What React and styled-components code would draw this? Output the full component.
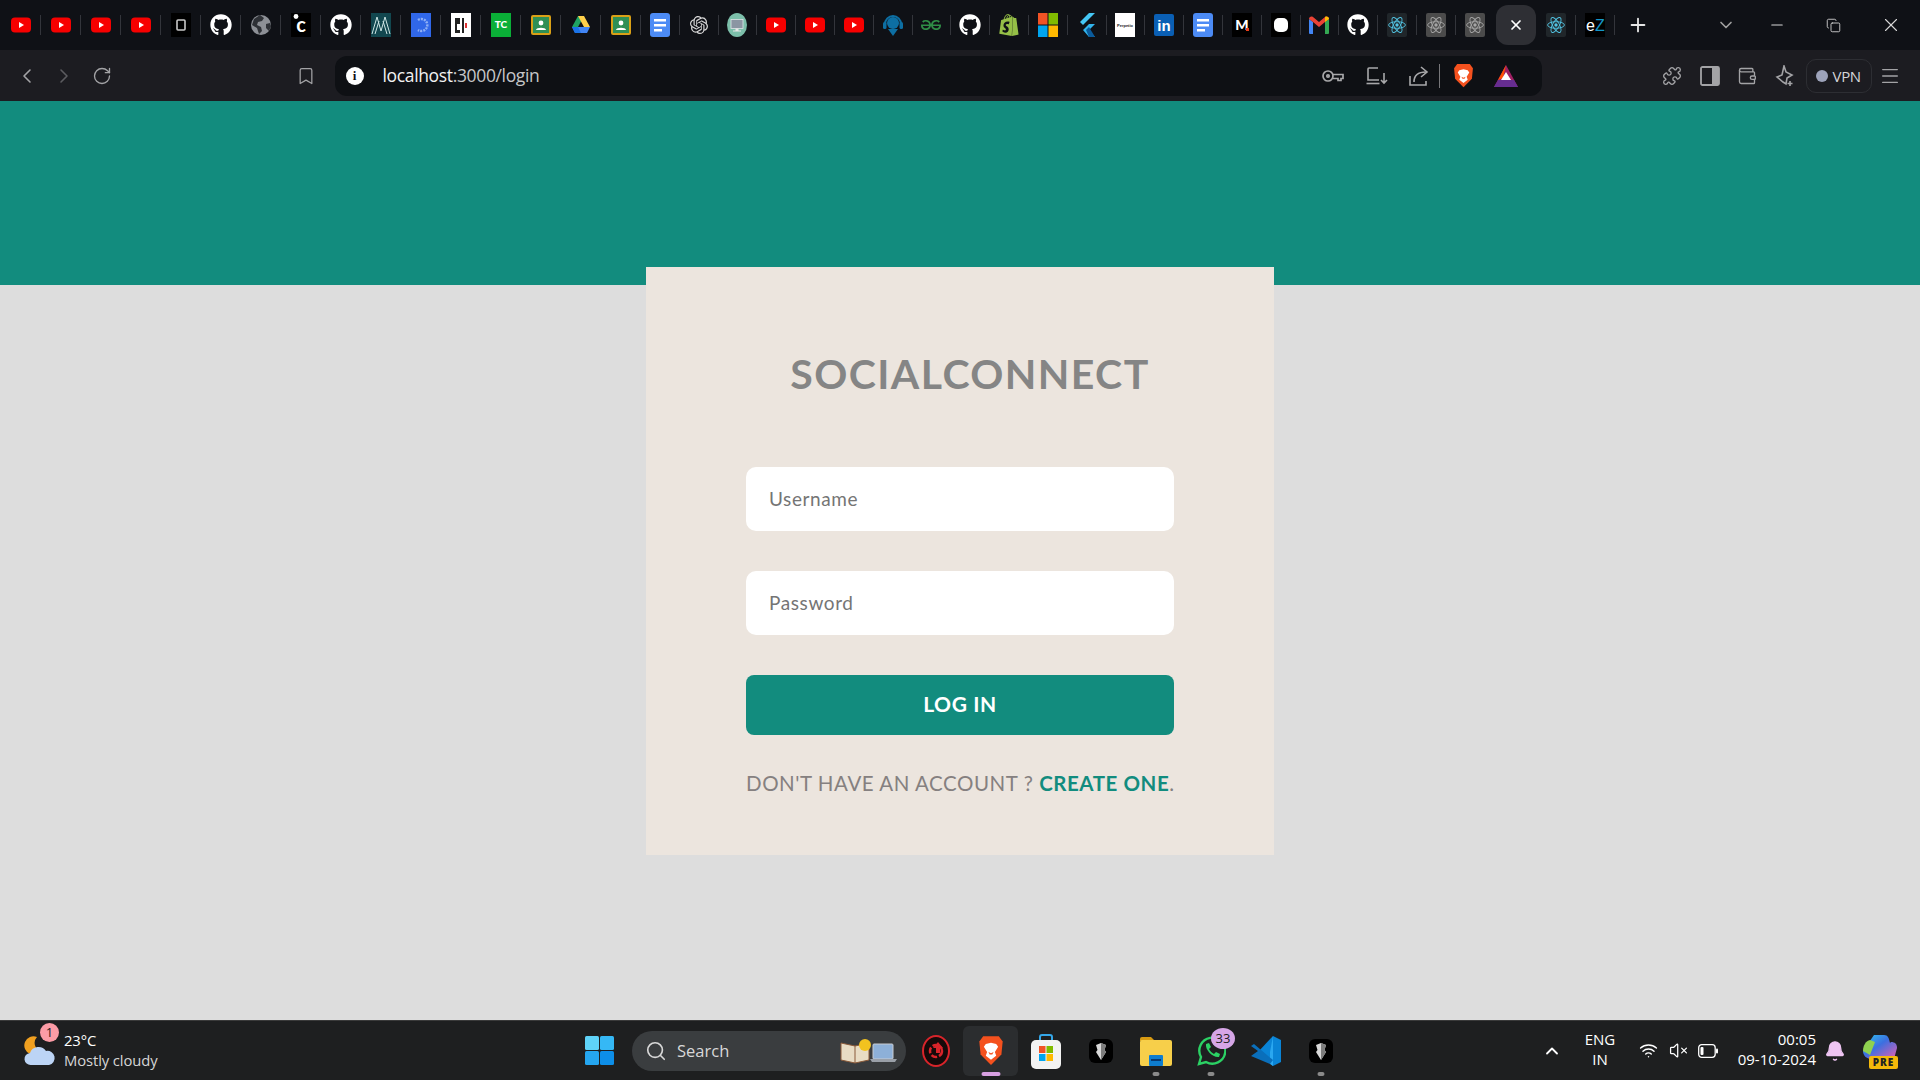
import React from 'react';
import styled, { createGlobalStyle } from 'styled-components';
import {
  ChevronLeft, ChevronRight, RotateCw, Bookmark, Puzzle, Wallet,
  Menu, X, Plus, ChevronDown, Minus, Copy, ChevronUp, Wifi, VolumeX, Bell, Search,
} from 'lucide-react';
import { FaGithub } from 'react-icons/fa';
import { SiOpenai, SiShopify, SiGeeksforgeeks } from 'react-icons/si';

const GlobalStyle = createGlobalStyle`
  html, body { margin: 0; padding: 0; height: 100%; overflow: hidden; }
  * { box-sizing: border-box; }
  body { font-family: "Open Sans", "Noto Sans", sans-serif; }
`;

const Screen = styled.div`
  display: flex;
  flex-direction: column;
  height: 100vh;
  background: #dddddd;
`;

/* browser chrome */
const TabStrip = styled.div`
  display: flex;
  align-items: center;
  height: 50px;
  padding-left: 1px;
  background: #0f1116;
  flex: none;
`;

const Tab = styled.div`
  flex: none;
  display: flex;
  align-items: center;
  justify-content: center;
  width: ${(p) => (p.$chip ? 43 : 38.8)}px;
  height: 20px;
  color: #fff;
  border-right: 1px solid ${(p) => (p.$plain ? 'transparent' : '#33353b')};
  &:nth-child(-n + 16) { width: 40px; }
`;

const ActiveChip = styled.div`
  flex: none;
  display: flex;
  align-items: center;
  justify-content: center;
  width: 40px;
  height: 40px;
  border-radius: 12px;
  background: #2e2f34;
`;

const NewTab = styled.div`
  display: flex;
  color: #e6e6e6;
  margin-left: 12px;
`;

const WindowControls = styled.div`
  display: flex;
  align-items: center;
  margin-left: auto;
  padding-right: 6px;
  color: #d8d8d8;
`;

const WinButton = styled.div`
  display: flex;
  justify-content: center;
  width: ${(p) => p.$w}px;
`;

const Toolbar = styled.div`
  display: flex;
  align-items: center;
  height: 51px;
  padding-left: 8px;
  background: #1c1c21;
  color: #a3a3a6;
  flex: none;
`;

const NavButton = styled.div`
  flex: none;
  display: flex;
  justify-content: center;
  width: ${(p) => p.$w || 37.5}px;
  color: ${(p) => (p.$dim ? '#5c5c60' : 'inherit')};
`;

const Bookmarks = styled(NavButton)`
  margin-left: 174px;
`;

const AddressBar = styled.div`
  flex: none;
  display: flex;
  align-items: center;
  width: 1207px;
  height: 40px;
  margin-left: 18px;
  margin-right: 112px;
  padding-left: 11px;
  border-radius: 12px;
  background: #0e1014;
`;

const InfoDot = styled.div`
  width: 18px;
  height: 18px;
  border-radius: 50%;
  background: #fff;
  display: flex;
  align-items: center;
  justify-content: center;
  color: #0e1014;
  font-weight: 700;
  font-size: 13px;
  font-family: "Liberation Serif", serif;
`;

const UrlText = styled.span`
  margin-left: 19px;
  margin-top: -2px;
  font-size: 17.5px;
  letter-spacing: -0.35px;
  color: #f2f2f2;
  & > span { color: #c6c6c8; }
`;

const BarActions = styled.div`
  margin-left: auto;
  padding-right: 24px;
  display: flex;
  align-items: center;
  color: #a8a8aa;
`;

const BarDivider = styled.div`
  width: 1px;
  height: 24px;
  background: #77777a;
`;

const BatSlot = styled.div`
  display: flex;
  margin-left: 6px;
`;

const VpnButton = styled.div`
  flex: none;
  display: flex;
  align-items: center;
  gap: 5px;
  width: 66px;
  height: 34px;
  margin-left: 2px;
  padding-left: 9px;
  border: 1px solid #2d2e33;
  border-radius: 10px;
  color: #d5d5d8;
  font-size: 15px;
  letter-spacing: -0.3px;
`;

const VpnDot = styled.div`
  width: 12px;
  height: 12px;
  border-radius: 50%;
  background: #9da3ba;
`;

/* login page */
const Banner = styled.div`
  height: 184px;
  background: #128c7e;
  flex: none;
`;

const Main = styled.main`
  flex: 1;
  background: #dddddd;
`;

const LoginCard = styled.div`
  position: relative;
  width: 628px;
  height: 588px;
  margin: -18px auto 0;
  padding: 80px 100px 0;
  background: #ece5de;
  font-family: Lato, "Open Sans", sans-serif;
`;

const Title = styled.h1`
  margin: 0 0 70px;
  padding-left: 20px;
  height: 50px;
  line-height: 54px;
  font-size: 41px;
  font-weight: 700;
  letter-spacing: 1.4px;
  text-align: center;
  color: #858585;
`;

const Form = styled.form`
  display: flex;
  flex-direction: column;
  gap: 40px;
`;

const Field = styled.input`
  height: 64px;
  width: 100%;
  padding: 0 23px 2px;
  border: none;
  border-radius: 10px;
  background: #fff;
  font-family: Lato, "Open Sans", sans-serif;
  font-size: 19px;
  letter-spacing: 0.6px;
  outline: none;
  &::placeholder { color: #757575; opacity: 1; }
`;

const LoginButton = styled.button`
  height: 60px;
  padding: 0 0 4px;
  border: none;
  border-radius: 8px;
  background: #128c7e;
  color: #fff;
  font-family: Lato, "Open Sans", sans-serif;
  font-size: 21px;
  font-weight: 700;
  letter-spacing: 0.6px;
`;

const Footnote = styled.p`
  margin: 33px 0 0;
  height: 30px;
  line-height: 30px;
  font-size: 20.5px;
  letter-spacing: 0.55px;
  text-align: center;
  white-space: nowrap;
  color: #858080;
`;

const CreateLink = styled.a`
  color: #128c7e;
  font-weight: 700;
  text-decoration: none;
`;

/* windows taskbar */
const Taskbar = styled.footer`
  flex: none;
  display: flex;
  align-items: center;
  height: 60px;
  background: #1e1f20;
  border-top: 1px solid #3a3a3a;
  color: #fff;
  font-family: "Open Sans", "Noto Sans", sans-serif;
`;

const Weather = styled.div`
  flex: none;
  position: relative;
  display: flex;
  align-items: center;
  gap: 8px;
  width: 585px;
  padding-left: 24px;
`;

const WeatherBadge = styled.div`
  position: absolute;
  left: 40px;
  top: -9px;
  width: 19px;
  height: 19px;
  border-radius: 50%;
  background: #fc9ca6;
  color: #222;
  font-size: 13px;
  display: flex;
  align-items: center;
  justify-content: center;
`;

const WeatherText = styled.div`
  margin-top: -2px;
  font-size: 14.8px;
  line-height: 20px;
  letter-spacing: -0.1px;
  & > div:last-child { color: #d6d6d6; }
`;

const SearchPill = styled.div`
  flex: none;
  display: flex;
  align-items: center;
  width: 274px;
  height: 40px;
  margin-left: 18px;
  margin-right: 2px;
  padding-left: 13px;
  border-radius: 20px;
  background: #3a3d3f;
  color: #d8d8d8;
  font-size: 16.5px;
  & > span { margin-left: 10px; }
  & > svg:last-child { margin-left: auto; margin-right: 8px; }
`;

const AppSlot = styled.div`
  flex: none;
  position: relative;
  display: flex;
  align-items: center;
  justify-content: center;
  width: 55px;
  height: 50px;
  border-radius: 6px;
  background: ${(p) => (p.$active ? '#2b2d2f' : 'transparent')};
`;

const RunDot = styled.div`
  position: absolute;
  bottom: 0;
  left: 50%;
  transform: translateX(-50%);
  width: ${(p) => (p.$active ? 19 : 7)}px;
  height: 4px;
  border-radius: 2px;
  background: ${(p) => (p.$active ? '#d8a0e2' : '#8a8a8a')};
`;

const CountBadge = styled.div`
  position: absolute;
  left: 28px;
  top: 2px;
  width: 24px;
  height: 21px;
  border-radius: 50%;
  background: #d6a6e6;
  color: #222;
  font-size: 13px;
  display: flex;
  align-items: center;
  justify-content: center;
`;

const Tray = styled.div`
  margin-left: auto;
  flex: none;
  display: flex;
  align-items: center;
  width: 383px;
  padding-right: 22px;
`;

const TraySlot = styled.div`
  flex: none;
  display: flex;
  justify-content: center;
  width: ${(p) => p.$w}px;
`;

const TwoLines = styled.div`
  flex: none;
  width: ${(p) => p.$w || 'auto'};
  margin-left: ${(p) => p.$ml || 0};
  text-align: ${(p) => p.$align};
  font-size: 15px;
  line-height: 20px;
  margin-top: -3px;
`;

const BellSlot = styled.div`
  display: flex;
  color: #eec4f2;
  margin-left: 8px;
  margin-right: 16px;
`;

/* favicons and logos */
const Yt = () => (
  <svg width="20" height="20" viewBox="0 0 20 20">
    <rect y="2.5" width="20" height="15" rx="4" fill="#f70000" />
    <path d="M8 7l5 3-5 3z" fill="#fff" />
  </svg>
);

const Tile = ({ bg = '#000', children, r = 0 }) => (
  <svg width="20" height="24" viewBox="0 0 20 24">
    <rect width="20" height="24" rx={r} fill={bg} />
    {children}
  </svg>
);

const Hub = () => <FaGithub size={22} color="#fff" />;

const Classroom = () => (
  <svg width="20" height="20" viewBox="0 0 20 20">
    <rect width="20" height="20" rx="2" fill="#d9a017" />
    <rect x="2" y="2" width="16" height="16" fill="#2f8f55" />
    <circle cx="10" cy="8" r="2.4" fill="#fff" />
    <path d="M5 15c0-3 10-3 10 0z" fill="#fff" />
  </svg>
);

const Drive = () => (
  <svg width="20" height="20" viewBox="0 0 20 20">
    <path d="M7 1h6l-6 11H1z" fill="#1fa463" />
    <path d="M13 1l6 11h-6L7 1z" fill="#ffd04b" />
    <path d="M1 12h18l-3 6H4z" fill="#4285f4" />
    <path d="M1 12h6l3 6H4z" fill="#1a73e8" />
  </svg>
);

const Docs = () => (
  <svg width="20" height="24" viewBox="0 0 20 24">
    <rect width="20" height="24" rx="3" fill="#4c8bf5" />
    <path d="M4 6h12v2.4H4zM4 11h12v2.4H4zM4 16h8v2.4H4z" fill="#fff" />
  </svg>
);

const Msft = () => (
  <svg width="20" height="24" viewBox="0 0 20 24">
    <rect width="9.5" height="11.5" fill="#f25325" />
    <rect x="10.5" width="9.5" height="11.5" fill="#80bb00" />
    <rect y="12.5" width="9.5" height="11.5" fill="#00a5ef" />
    <rect x="10.5" y="12.5" width="9.5" height="11.5" fill="#ffb900" />
  </svg>
);

const Flutter = () => (
  <svg width="18" height="24" viewBox="0 0 18 24">
    <path d="M11 0h6L5 12l-3-3z" fill="#45c7f5" />
    <path d="M11 11h6l-6 6 6 7h-6l-6-7z" fill="#32b4ec" />
    <path d="M8 17l3-3 6 10h-6z" fill="#0a5b9c" />
  </svg>
);

const Gmail = () => (
  <svg width="20" height="18" viewBox="0 0 20 18">
    <path d="M0 3l4 3v12H1a1 1 0 0 1-1-1z" fill="#4285f4" />
    <path d="M16 6l4-3v14a1 1 0 0 1-1 1h-3z" fill="#34a853" />
    <path d="M0 3c0-2 2-3 4-2l6 5 6-5c2-1 4 0 4 2l-4 3-6 5-6-5z" fill="#ea4335" />
    <path d="M16 1c2-1 4 0 4 2l-4 3z" fill="#fbbc04" />
  </svg>
);

const ReactTile = ({ grey }) => (
  <svg width="20" height="24" viewBox="0 0 20 24">
    <rect width="20" height="24" rx="2" fill={grey ? '#4b4b4b' : '#20262a'} />
    <g fill="none" stroke={grey ? '#a6a6a6' : '#52c5e4'} strokeWidth="0.9">
      <ellipse cx="10" cy="12" rx="8.4" ry="3.3" />
      <ellipse cx="10" cy="12" rx="8.4" ry="3.3" transform="rotate(60 10 12)" />
      <ellipse cx="10" cy="12" rx="8.4" ry="3.3" transform="rotate(120 10 12)" />
    </g>
    <circle cx="10" cy="12" r="1.7" fill={grey ? '#a6a6a6' : '#52c5e4'} />
  </svg>
);

const Brave = ({ size = 21 }) => (
  <svg width={size} height={size * 1.2} viewBox="0 0 20 24">
    <path d="M4 1h12l3 4-1 10-8 8-8-8L1 5z" fill="#f4511e" />
    <path d="M6 7l4-1 4 1 1.5 2-2.5 4 1 3-4 3-4-3 1-3-2.500-4z" fill="#fff" />
    <path d="M8 13l2 1 2-1-1 2h-2z" fill="#f4511e" />
  </svg>
);

const Bat = () => (
  <svg width="24" height="22" viewBox="0 0 24 22">
    <path d="M12 0l12 22H0z" fill="#9e1f63" />
    <path d="M12 0L4 15l5-2z" fill="#ff5000" />
    <path d="M0 22l4-7 16 0 4 7z" fill="#662d91" />
    <path d="M12 7l5 8H7z" fill="#fff" />
  </svg>
);

const DarkShard = () => (
  <svg width="24" height="24" viewBox="0 0 24 24">
    <rect width="24" height="24" rx="6" fill="#000" />
    <path d="M7 6l5-2 5 2-1.500 5 1.500 2-5 8-5-8 1.500-2z" fill="#d8d8d8" />
    <path d="M12 4l5 2-1.500 5 1.500 2-5 8z" fill="#7d7d7d" />
  </svg>
);

const KeyIcon = () => (
  <svg width="22" height="14" viewBox="0 0 22 14" fill="none" stroke="currentColor" strokeWidth="1.7">
    <circle cx="6" cy="7" r="5" />
    <circle cx="6" cy="7" r="1.2" />
    <path d="M11 5.500h10v4h-2v2h-3v-2h-5" />
  </svg>
);

const LaptopDownIcon = () => (
  <svg width="22" height="20" viewBox="0 0 22 20" fill="none" stroke="currentColor" strokeWidth="1.6">
    <path d="M12 2H3a1 1 0 0 0-1 1v11h11" />
    <path d="M0.500 17.500h13" />
    <path d="M18 7v10M15 14l3 3 3-3" />
  </svg>
);

const ShareIcon = () => (
  <svg width="20" height="22" viewBox="0 0 20 22" fill="none" stroke="currentColor" strokeWidth="1.6">
    <path d="M1 11v9h16v-4" />
    <path d="M5 17c0-7 4-10 12-10" />
    <path d="M12 2l6 5-6 5" />
  </svg>
);

const SidebarIcon = () => (
  <svg width="20" height="20" viewBox="0 0 20 20">
    <rect x="1" y="1" width="18" height="18" rx="1.500" fill="none" stroke="currentColor" strokeWidth="1.800" />
    <rect x="12" y="1" width="7" height="18" fill="currentColor" />
  </svg>
);

const SparkIcon = () => (
  <svg width="20" height="22" viewBox="0 0 20 22" fill="none" stroke="currentColor" strokeWidth="1.6">
    <path d="M9 1l2 6 6 3-5 3-1 6-3-2-6-5 5-2z" />
    <path d="M15 16v5M12.500 18.500h5" />
  </svg>
);

const favicons = [
  <Yt />, <Yt />, <Yt />, <Yt />,
  <Tile><rect x="6" y="7" width="8" height="10" rx="1" fill="none" stroke="#c8c8c8" strokeWidth="1.6" /></Tile>,
  <Hub />,
  <svg width="20" height="20" viewBox="0 0 20 20">
    <circle cx="10" cy="10" r="10" fill="#8d9096" />
    <path d="M9 0l4 3-2 3-4 1-1 3 4 2 1 4-3 3-2-6-5-3 2-6zM15 9l4-1 1 3-2 5-3-3z" fill="#0f1116" opacity="0.75" />
  </svg>,
  <Tile><text x="10" y="19" fontSize="20" fontWeight="700" fontFamily="Lato" textAnchor="middle" fill="#fff">c</text><circle cx="5" cy="3.500" r="2.400" fill="#fff" /></Tile>,
  <Hub />,
  <Tile bg="#12474f"><path d="M1 21L6 4l4 14 4-14 5 17M4 21L8 8M16 21L12 8" fill="none" stroke="#cfe7e6" strokeWidth="1" /></Tile>,
  <Tile bg="#3067e8"><path d="M7 7a6 6 0 1 1 0 10" fill="none" stroke="#8fb0f5" strokeWidth="2.400" strokeDasharray="2 1" /></Tile>,
  <Tile bg="#fff"><path d="M4 5h5v6H6v6h3v3H4zM11 5h2v15h-2z" fill="#222" /><rect x="14" y="10" width="2" height="5" fill="#d33" /></Tile>,
  <Tile bg="#0aaf37"><text x="10" y="15" fontSize="10" fontWeight="900" fontFamily="Lato" textAnchor="middle" fill="#fff">TC</text></Tile>,
  <Classroom />, <Drive />, <Classroom />, <Docs />,
  <SiOpenai size={18} color="#d8d8d8" />,
  <svg width="20" height="24" viewBox="0 0 20 24">
    <ellipse cx="10" cy="12" rx="10" ry="12" fill="#7cbfaa" />
    <rect x="4" y="6.500" width="12" height="9" fill="#8b96a3" stroke="#dfe5e8" strokeWidth="0.800" />
    <path d="M8.500 15.500h3v2H14v1H6v-1h2.500z" fill="#e6e6e6" />
  </svg>,
  <Yt />, <Yt />, <Yt />,
  <svg width="20" height="22" viewBox="0 0 20 22">
    <path d="M2 10a8 8 0 0 1 16 0" fill="none" stroke="#0d6fa3" strokeWidth="2" />
    <circle cx="10" cy="9" r="6" fill="#0d6fa3" />
    <rect x="0" y="8" width="3.500" height="7" rx="1.500" fill="#0d6fa3" />
    <rect x="16.500" y="8" width="3.500" height="7" rx="1.500" fill="#0d6fa3" />
    <path d="M5 15l5 7 5-7z" fill="#0d6fa3" />
  </svg>,
  <SiGeeksforgeeks size={20} color="#2f8d46" />,
  <Hub />,
  <SiShopify size={22} color="#95bf47" />,
  <Msft />, <Flutter />,
  <Tile bg="#fff"><text x="10" y="14" fontSize="4" fontWeight="700" fontFamily="Liberation Sans" textAnchor="middle" fill="#222">Perpetio</text></Tile>,
  <svg width="20" height="22" viewBox="0 0 20 22">
    <rect width="20" height="22" rx="2" fill="#0a5fb4" />
    <text x="10" y="17" fontSize="15" fontWeight="700" fontFamily="Liberation Sans" textAnchor="middle" fill="#fff">in</text>
  </svg>,
  <Docs />,
  <Tile><text x="10" y="17" fontSize="14" fontWeight="900" fontFamily="Lato" textAnchor="middle" fill="#fff">M</text><rect x="14" y="15" width="3" height="3" fill="#e8401c" /></Tile>,
  <Tile><rect x="3" y="5" width="14" height="14" rx="5" fill="#fff" /></Tile>,
  <Gmail />, <Hub />,
  <ReactTile />, <ReactTile grey />, <ReactTile grey />,
  <ActiveChip><X size={16} strokeWidth={2.6} /></ActiveChip>,
  <ReactTile />,
  <Tile><text x="1" y="18" fontSize="16" fontFamily="Liberation Sans" fill="#fff">e</text><text x="10" y="18" fontSize="16" fontFamily="Liberation Sans" fill="#1496c8">Z</text></Tile>,
];

const apps = [
  { id: 'driver', icon: (
    <svg width="28" height="32" viewBox="0 0 28 32">
      <ellipse cx="14" cy="16" rx="13" ry="15" fill="#150a0a" stroke="#d8242a" strokeWidth="2" />
      <circle cx="14" cy="16" r="6" fill="none" stroke="#d8242a" strokeWidth="2.500" strokeDasharray="6 2" />
      <path d="M16 7l5 6h-3v5h-4v-5h-3z" fill="#d8242a" />
    </svg>
  ) },
  { id: 'brave', active: true, icon: <Brave size={26} /> },
  { id: 'store', icon: (
    <svg width="30" height="36" viewBox="0 0 30 36">
      <path d="M9 8V4a2 2 0 0 1 2-2h8a2 2 0 0 1 2 2v4" fill="none" stroke="#35a7e8" strokeWidth="2" />
      <rect y="7" width="30" height="29" rx="5" fill="#f3f3f3" />
      <rect x="8" y="13" width="6.500" height="7" fill="#f25325" />
      <rect x="15.500" y="13" width="6.500" height="7" fill="#80bb00" />
      <rect x="8" y="21" width="6.500" height="7" fill="#00a5ef" />
      <rect x="15.500" y="21" width="6.500" height="7" fill="#ffb900" />
    </svg>
  ) },
  { id: 'shard', icon: <DarkShard /> },
  { id: 'files', dot: true, icon: (
    <svg width="32" height="30" viewBox="0 0 32 30">
      <path d="M0 3a2 2 0 0 1 2-2h9l4 4H0z" fill="#d79a12" />
      <rect y="4" width="32" height="26" rx="2" fill="#f7cf4a" />
      <rect x="9" y="19" width="14" height="11" rx="1" fill="#0e7dcf" />
      <rect x="11" y="23" width="10" height="2" fill="#063a73" />
    </svg>
  ) },
  { id: 'whatsapp', dot: true, badge: '33', icon: (
    <svg width="30" height="32" viewBox="0 0 30 32">
      <path d="M3 29l2-7a13 13 0 1 1 5 5z" fill="none" stroke="#2bd164" strokeWidth="2.400" />
      <path d="M10 9l3-1 2 4-2 2c1 2 3 4 5 5l2-2 4 2-1 3c-6 1-14-7-13-13z" fill="#2bd164" />
    </svg>
  ) },
  { id: 'vscode', icon: (
    <svg width="32" height="32" viewBox="0 0 32 32">
      <path d="M23 1l8 4v22l-8 4L8 17z" fill="#0a84d6" />
      <path d="M23 1v30l-3-2V17z" fill="#2aa7f0" />
      <path d="M1 11l3-2 19 16-3 4L1 21l7-5z" fill="#0a6fbb" />
    </svg>
  ) },
  { id: 'shard-2', dot: true, icon: <DarkShard /> },
];

export default function App() {
  return (
    <Screen>
      <GlobalStyle />
      <TabStrip>
        {favicons.map((icon, i) => (
          <Tab key={i} $chip={i === 38} $plain={i === 37 || i === 38}>{icon}</Tab>
        ))}
        <NewTab><Plus size={22} strokeWidth={2} /></NewTab>
        <WindowControls>
          <WinButton $w={60}><ChevronDown size={20} color="#a0a0a0" /></WinButton>
          <WinButton $w={42}><Minus size={18} strokeWidth={1.4} /></WinButton>
          <WinButton $w={70}><Copy size={15} strokeWidth={1.4} /></WinButton>
          <WinButton $w={46}><X size={22} strokeWidth={1.2} /></WinButton>
        </WindowControls>
      </TabStrip>

      <Toolbar>
        <NavButton><ChevronLeft size={24} strokeWidth={1.6} /></NavButton>
        <NavButton $dim><ChevronRight size={24} strokeWidth={1.6} /></NavButton>
        <NavButton><RotateCw size={20} strokeWidth={1.6} /></NavButton>
        <Bookmarks $w={22}><Bookmark size={20} strokeWidth={1.5} /></Bookmarks>
        <AddressBar>
          <InfoDot>i</InfoDot>
          <UrlText>localhost<span>:3000/login</span></UrlText>
          <BarActions>
            <NavButton $w={44}><KeyIcon /></NavButton>
            <NavButton $w={44}><LaptopDownIcon /></NavButton>
            <NavButton $w={40}><ShareIcon /></NavButton>
            <BarDivider />
            <NavButton $w={48}><Brave /></NavButton>
            <BatSlot><Bat /></BatSlot>
          </BarActions>
        </AddressBar>
        <NavButton><Puzzle size={20} strokeWidth={1.6} /></NavButton>
        <NavButton><SidebarIcon /></NavButton>
        <NavButton><Wallet size={20} strokeWidth={1.6} /></NavButton>
        <NavButton><SparkIcon /></NavButton>
        <VpnButton><VpnDot />VPN</VpnButton>
        <NavButton><Menu size={22} strokeWidth={1.4} /></NavButton>
      </Toolbar>

      <Banner />
      <Main>
        <LoginCard>
          <Title>SOCIALCONNECT</Title>
          <Form onSubmit={(e) => e.preventDefault()}>
            <Field type="text" placeholder="Username" />
            <Field type="password" placeholder="Password" />
            <LoginButton type="submit">LOG IN</LoginButton>
          </Form>
          <Footnote>DON'T HAVE AN ACCOUNT ? <CreateLink href="#">CREATE ONE</CreateLink>.</Footnote>
        </LoginCard>
      </Main>

      <Taskbar>
        <Weather>
          <svg width="32" height="30" viewBox="0 0 32 30">
            <path d="M13 1a9 9 0 0 0 6 15L6 18A9 9 0 0 1 13 1z" fill="#f0a020" />
            <path d="M7 29a6 6 0 0 1-1-12 9 9 0 0 1 16-2 7 7 0 0 1 3 14z" fill="#bcd4f5" />
          </svg>
          <WeatherBadge>1</WeatherBadge>
          <WeatherText>
            <div>23°C</div>
            <div>Mostly cloudy</div>
          </WeatherText>
        </Weather>

        <svg width="29" height="29" viewBox="0 0 29 29">
          <rect width="14" height="14" rx="1.500" fill="#5fd3f8" />
          <rect x="15" width="14" height="14" rx="1.500" fill="#35b8f5" />
          <rect y="15" width="14" height="14" rx="1.500" fill="#25a6f0" />
          <rect x="15" y="15" width="14" height="14" rx="1.500" fill="#0d8ee8" />
        </svg>

        <SearchPill>
          <Search size={22} strokeWidth={1.8} />
          <span>Search</span>
          <svg width="58" height="26" viewBox="0 0 58 26">
            <path d="M1 5l14 3 14-3v17l-14 3-14-3z" fill="#e8dcc4" stroke="#8a5a3a" />
            <path d="M15 8v17" stroke="#8a5a3a" />
            <circle cx="25" cy="7" r="6" fill="#f2c21f" />
            <rect x="33" y="6" width="20" height="15" rx="1" fill="#8db0d8" stroke="#c8ccd2" />
            <path d="M30 21h27l-2 3H32z" fill="#9aa0a8" />
          </svg>
        </SearchPill>

        {apps.map((app) => (
          <AppSlot key={app.id} $active={app.active}>
            {app.icon}
            {app.badge && <CountBadge>{app.badge}</CountBadge>}
            {(app.dot || app.active) && <RunDot $active={app.active} />}
          </AppSlot>
        ))}

        <Tray>
          <TraySlot $w={30}><ChevronUp size={20} strokeWidth={2.2} /></TraySlot>
          <TwoLines $w="66px" $align="center">
            <div>ENG</div>
            <div>IN</div>
          </TwoLines>
          <TraySlot $w={30}><Wifi size={19} strokeWidth={1.8} /></TraySlot>
          <TraySlot $w={30}><VolumeX size={19} strokeWidth={1.6} /></TraySlot>
          <TraySlot $w={30}>
            <svg width="20" height="14" viewBox="0 0 20 14">
              <rect x="0.700" y="0.700" width="16.500" height="12.600" rx="3" fill="none" stroke="#fff" strokeWidth="1.300" />
              <rect x="2.500" y="3" width="3" height="8" rx="1" fill="#fff" />
              <rect x="18" y="4.500" width="2" height="5" rx="1" fill="#fff" />
            </svg>
          </TraySlot>
          <TwoLines $ml="auto" $align="right">
            <div>00:05</div>
            <div>09-10-2024</div>
          </TwoLines>
          <BellSlot><Bell size={22} fill="#eec4f2" strokeWidth={1.5} /></BellSlot>
          <svg width="36" height="36" viewBox="0 0 36 36">
            <defs>
              <linearGradient id="copilot" x1="0" y1="0" x2="1" y2="1">
                <stop offset="0" stopColor="#2fc7f0" />
                <stop offset="0.45" stopColor="#3c6fe0" />
                <stop offset="1" stopColor="#e85fb0" />
              </linearGradient>
            </defs>
            <path d="M12 2h10c4 0 5 3 6 8l1-1c4 0 6 2 6 6l-3 11H10c-5 0-9-3-9-8z" fill="url(#copilot)" />
            <path d="M1 18C1 12 4 8 8 7l5 2-5 13z" fill="#8fd14f" />
            <rect x="7" y="23" width="29" height="13" rx="2" fill="#f5b90a" />
            <text x="21.500" y="33" fontSize="10" fontWeight="800" letterSpacing="1" fontFamily="Open Sans" textAnchor="middle" fill="#222">PRE</text>
          </svg>
        </Tray>
      </Taskbar>
    </Screen>
  );
}
